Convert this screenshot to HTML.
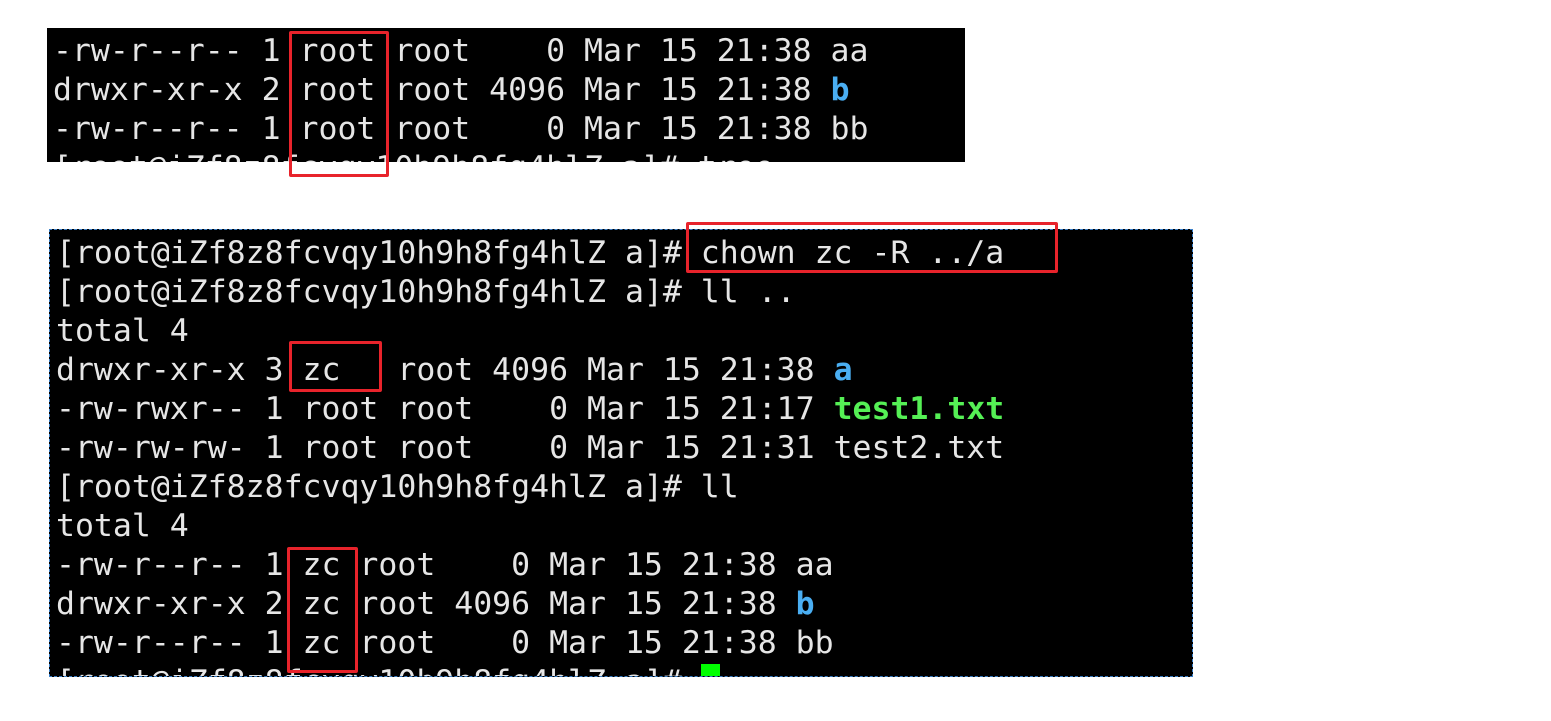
<!DOCTYPE html>
<html><head><meta charset="utf-8"><style>
body{margin:0;background:#fff;width:1551px;height:721px;position:relative;overflow:hidden}
.t{position:absolute;background:#000;overflow:hidden;font-family:"DejaVu Sans Mono","Liberation Mono",monospace;font-size:31.5px;line-height:39px;color:#e6e6e6;white-space:pre}
.b{color:#4aaef2;font-weight:bold}.g{color:#55f055;font-weight:bold}
.r{position:absolute;border:3px solid #e8232b;border-radius:2px;box-sizing:border-box}
</style></head><body>
<div class="t" style="left:47px;top:28px;width:918px;height:134px;padding:0 0 0 6px;box-sizing:border-box;padding-top:4px">-rw-r--r-- 1 root root    0 Mar 15 21:38 aa
drwxr-xr-x 2 root root 4096 Mar 15 21:38 <span class="b">b</span>
-rw-r--r-- 1 root root    0 Mar 15 21:38 bb
[root@iZf8z8fcvqy10h9h8fg4hlZ a]# tree</div>
<div class="t" style="left:49px;top:229px;width:1144px;height:448px;padding:4px 0 0 6px;box-sizing:border-box;border:1px dashed #3a7fc8">[root@iZf8z8fcvqy10h9h8fg4hlZ a]# chown zc -R ../a
[root@iZf8z8fcvqy10h9h8fg4hlZ a]# ll ..
total 4
drwxr-xr-x 3 zc   root 4096 Mar 15 21:38 <span class="b">a</span>
-rw-rwxr-- 1 root root    0 Mar 15 21:17 <span class="g">test1.txt</span>
-rw-rw-rw- 1 root root    0 Mar 15 21:31 test2.txt
[root@iZf8z8fcvqy10h9h8fg4hlZ a]# ll
total 4
-rw-r--r-- 1 zc root    0 Mar 15 21:38 aa
drwxr-xr-x 2 zc root 4096 Mar 15 21:38 <span class="b">b</span>
-rw-r--r-- 1 zc root    0 Mar 15 21:38 bb
[root@iZf8z8fcvqy10h9h8fg4hlZ a]# <span style="background:#00ff00"> </span></div>
<div class="r" style="left:289px;top:31px;width:100px;height:146px"></div>
<div class="r" style="left:686px;top:222px;width:372px;height:51px"></div>
<div class="r" style="left:289px;top:341px;width:93px;height:51px"></div>
<div class="r" style="left:287px;top:547px;width:71px;height:126px"></div>
</body></html>
